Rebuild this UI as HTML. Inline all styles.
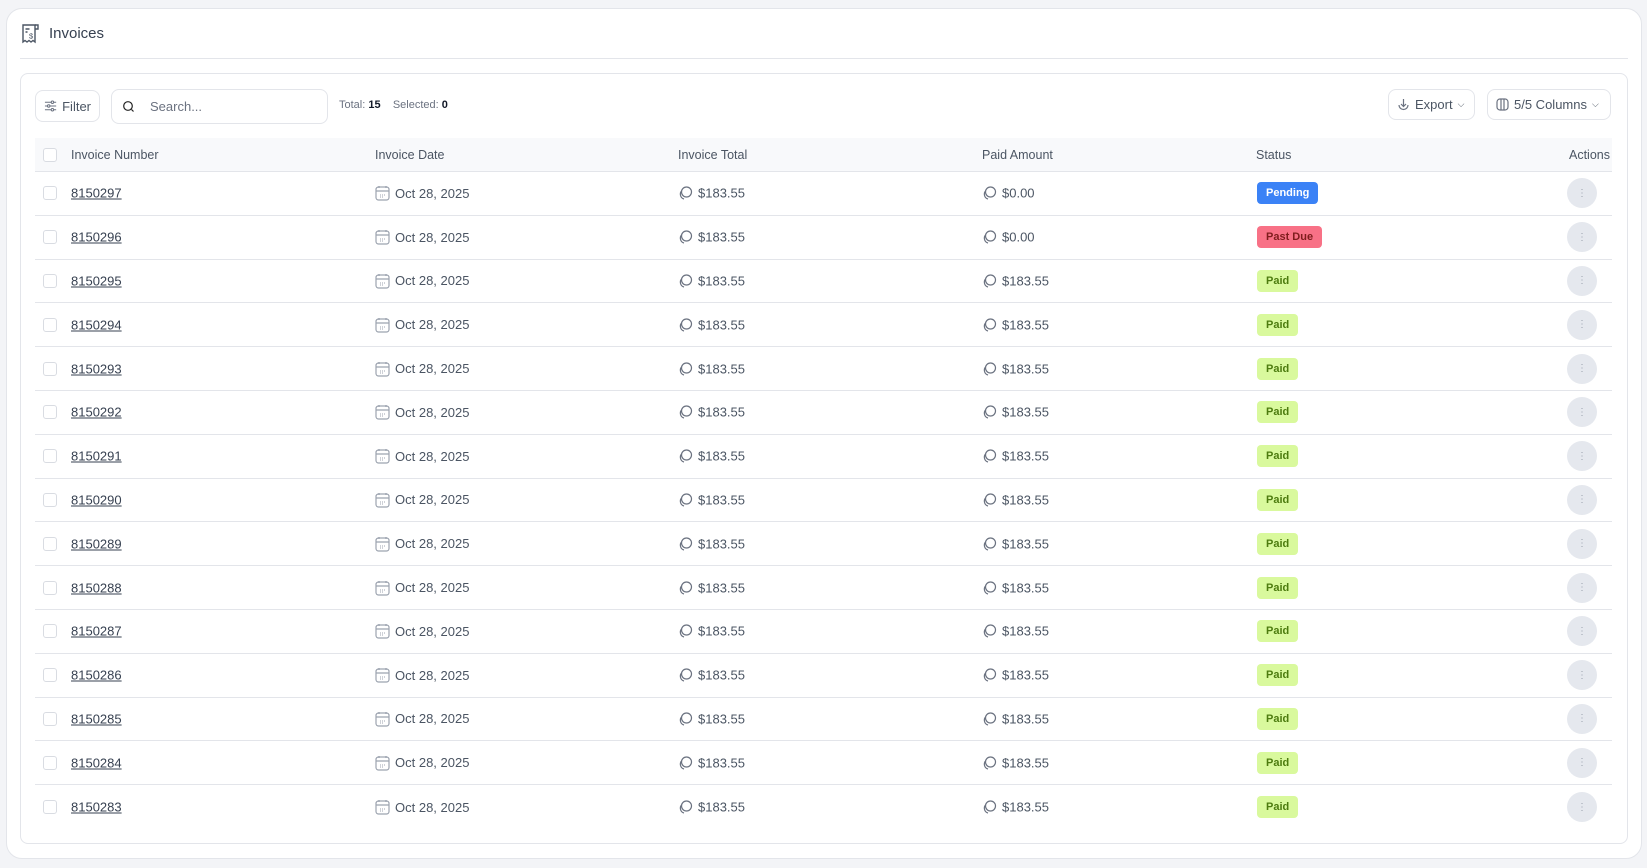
<!DOCTYPE html>
<html><head><meta charset="utf-8"><style>
*{box-sizing:border-box;margin:0;padding:0}
body{width:1647px;height:868px;background:#f3f4f7;font-family:"Liberation Sans",sans-serif;color:#4b5563;position:relative;overflow:hidden}
.outer{position:absolute;left:6px;top:8px;width:1636px;height:851px;background:#fff;border:1px solid #e3e5ea;border-radius:16px}
.title{position:absolute;left:21px;top:23px;display:flex;align-items:center;gap:8px;font-size:15px;color:#374151}
.div{position:absolute;left:20px;top:58px;width:1608px;height:1px;background:#e3e5ea}
.inner{position:absolute;left:20px;top:73px;width:1608px;height:771px;border:1px solid #e3e5ea;border-radius:8px}
.btn{position:absolute;border:1px solid #e3e5ea;border-radius:8px;display:flex;align-items:center;font-size:13px;color:#4b5563;gap:5px;padding:0 8px}
.tot{position:absolute;left:339px;top:99px;font-size:11px;color:#6b7280}
.tot b{color:#111827}
.tbl{position:absolute;left:35px;top:138px;width:1577px}
.hd{height:34px;background:#f8f9fb;border-bottom:1px solid #e3e5ea;position:relative;font-size:12.5px;color:#4b5563}
.row{height:43.8px;border-bottom:1px solid #e3e5ea;position:relative;font-size:13px;color:#4b5563}
.row:last-child{border-bottom:none}
.c{position:absolute;top:50%;transform:translateY(-50%);display:flex;align-items:center;gap:5px;white-space:nowrap}
.cb{width:14px;height:14px;border:1px solid #d9dce2;border-radius:3px;left:8px}
.num{color:#374151;text-decoration:underline}
.badge{font-size:11px;font-weight:bold;padding:0 9px;height:22px;line-height:22px;border-radius:4px}
.act{width:30px;height:30px;border-radius:50%;background:#e5e8ee;left:1532px;justify-content:center;color:#9ca3af;font-size:10px}
</style></head><body>
<div class="outer"></div>
<div class="title"><svg width="20" height="21" viewBox="0 0 20 21" fill="none" stroke="#4b5563" stroke-width="1.4"><path d="M2 2h12v17l-2-1.5-2 1.5-2-1.5-2 1.5-2-1.5-2 1.5V2z"/><path d="M14 2h3v4h-3"/><path d="M4.5 6h4M4.5 9h2"/><text x="8" y="15.5" font-size="7.5" fill="#4b5563" stroke="none" font-family="Liberation Sans">$</text></svg>Invoices</div>
<div class="div"></div>
<div class="inner"></div>
<div class="btn" style="left:35px;top:90px;width:65px;height:32px"><svg width="14" height="14" viewBox="0 0 14 14" stroke="#6b7280" fill="none" stroke-width="1.1"><path d="M1 3h12M1 7h12M1 11h12"/><circle cx="9" cy="3" r="1.3" fill="#fff"/><circle cx="5" cy="7" r="1.3" fill="#fff"/><circle cx="9" cy="11" r="1.3" fill="#fff"/></svg>Filter</div>
<div class="btn" style="left:111px;top:89px;width:217px;height:35px;padding-left:10px;gap:14px;color:#6b7280"><svg width="14" height="14" viewBox="0 0 14 14" fill="none" stroke="#222" stroke-width="1.2"><circle cx="6" cy="6" r="4.3"/><path d="M9.5 9.5l2 2"/></svg>Search...</div>
<div class="tot">Total: <b>15</b>&nbsp;&nbsp;&nbsp;&nbsp;Selected: <b>0</b></div>
<div class="btn" style="left:1388px;top:89px;width:87px;height:31px"><svg width="13" height="13" viewBox="0 0 13 13" fill="none" stroke="#6b7280" stroke-width="1.2"><path d="M6.5 1v7M4 6l2.5 2.5L9 6M2 7a4.5 4.5 0 0 0 9 0"/></svg>Export <span style="font-size:9px">⌵</span></div>
<div class="btn" style="left:1487px;top:89px;width:124px;height:31px"><svg width="13" height="13" viewBox="0 0 13 13" fill="none" stroke="#6b7280" stroke-width="1.2"><rect x="1" y="1" width="11" height="11" rx="3"/><path d="M5 1v11M8 1v11"/></svg>5/5 Columns <span style="font-size:9px">⌵</span></div>
<div class="tbl">
<div class="hd"><div class="c cb" style="background:#fff"></div><div class="c" style="left:36px">Invoice Number</div><div class="c" style="left:340px">Invoice Date</div><div class="c" style="left:643px">Invoice Total</div><div class="c" style="left:947px">Paid Amount</div><div class="c" style="left:1221px">Status</div><div class="c" style="right:2px">Actions</div></div>
<div id="rows"></div>
</div>
<script>
var cal='<svg width="15" height="16" viewBox="0 0 15 16" fill="none" stroke="#9ca3af" stroke-width="1.2"><rect x="1" y="2" width="13" height="13" rx="2.5"/><path d="M1 6h13M4 1v2M11 1v2"/><path d="M5 10h1M7 10h1M9 10h1M5 12h1M7 12h1" stroke-width="1"/></svg>';
var coin='<svg width="15" height="15" viewBox="0 0 15 15" fill="none" stroke="#6b7280" stroke-width="1.2"><circle cx="8.5" cy="6.5" r="5"/><path d="M4 5a5 5 0 0 0 2 8.5"/></svg>';
var h='';
for(var i=0;i<15;i++){
var n=8150297-i;var b,p;
if(i==0){b='<span class="badge" style="background:#3b82f6;color:#fff">Pending</span>';p='$0.00'}
else if(i==1){b='<span class="badge" style="background:#f87186;color:#7f1d1d">Past Due</span>';p='$0.00'}
else{b='<span class="badge" style="background:#d9f99d;color:#4d7c0f">Paid</span>';p='$183.55'}
h+='<div class="row"><div class="c cb"></div><div class="c num" style="left:36px">'+n+'</div><div class="c" style="left:340px">'+cal+'Oct 28, 2025</div><div class="c" style="left:643px">'+coin+'$183.55</div><div class="c" style="left:947px">'+coin+p+'</div><div class="c" style="left:1222px">'+b+'</div><div class="c act">⋮</div></div>';
}
document.getElementById('rows').innerHTML=h;
</script>
</body></html>
